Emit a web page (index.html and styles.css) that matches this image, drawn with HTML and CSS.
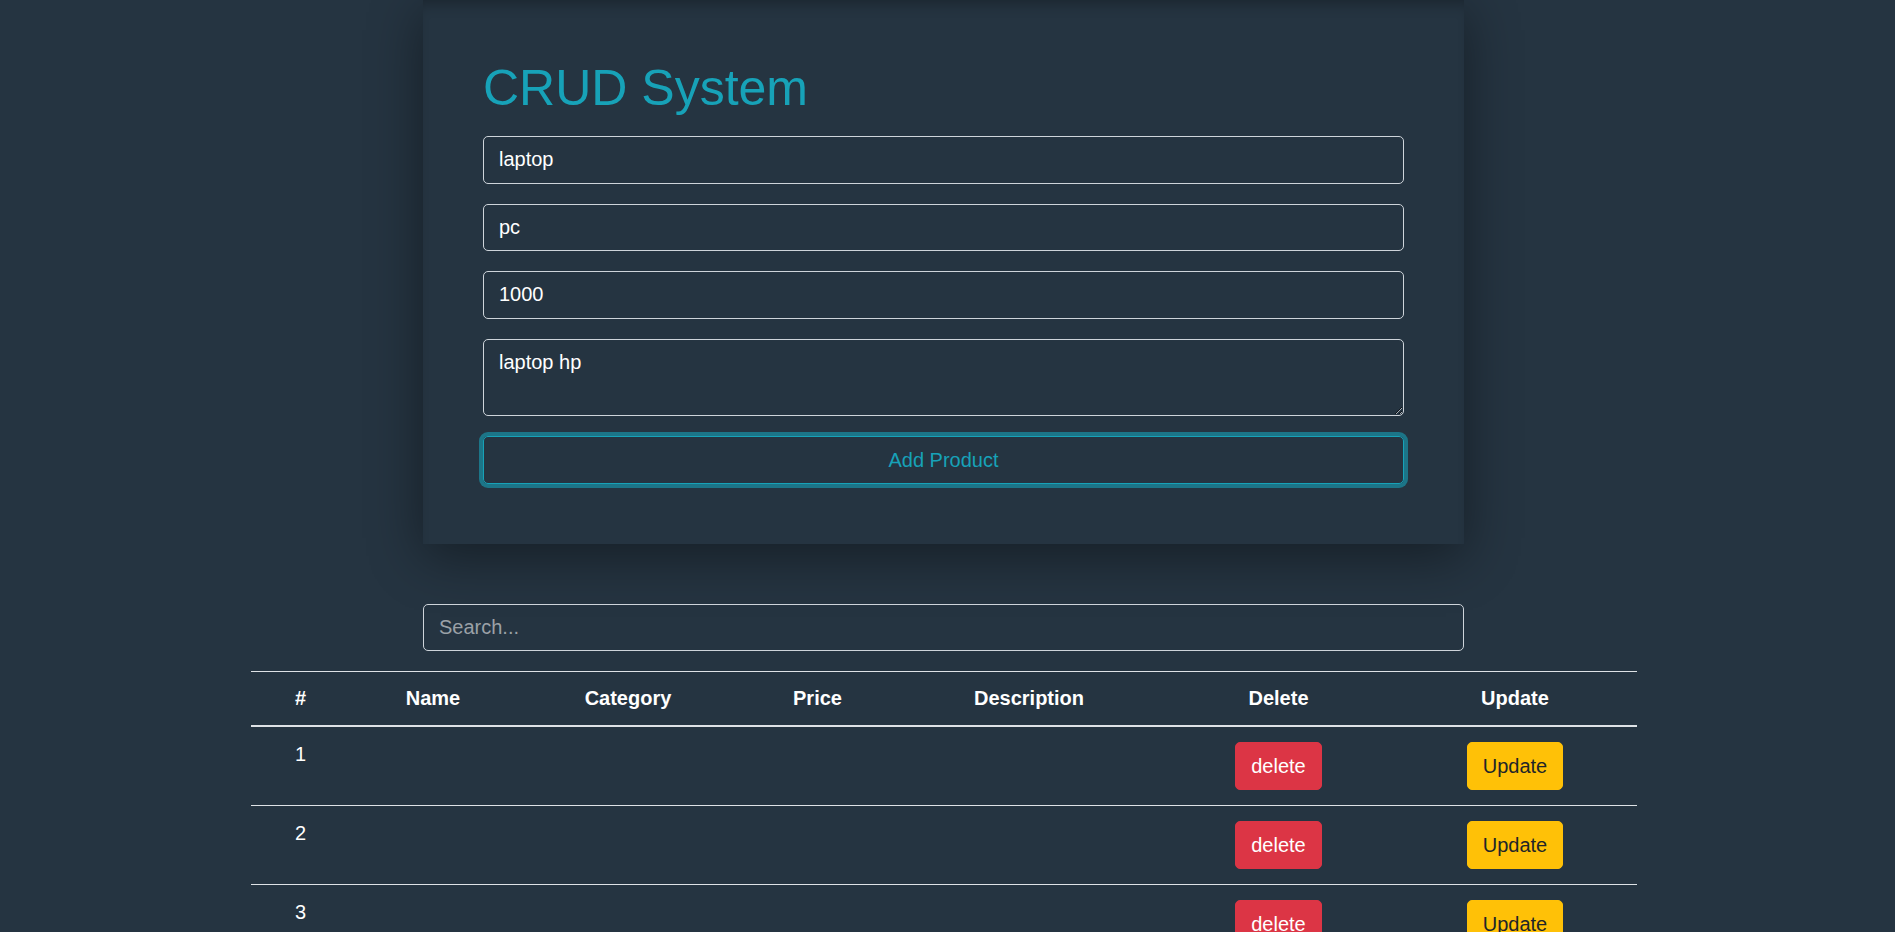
FILE: index.html
```html
<!DOCTYPE html>
<html lang="en">
<head>
<meta charset="utf-8">
<title>CRUD System</title>
<link rel="stylesheet" href="styles.css">
</head>
<body>
<div class="page">
  <section class="card">
    <h1 class="title">CRUD System</h1>
    <form class="form">
      <input class="field" type="text" value="laptop">
      <input class="field" type="text" value="pc">
      <input class="field" type="text" value="1000">
      <textarea class="field area" rows="2">laptop hp</textarea>
      <button type="button" class="btn-add">Add Product</button>
    </form>
  </section>

  <input class="field search" type="text" placeholder="Search...">

  <table class="products">
    <colgroup>
      <col class="c1"><col class="c2"><col class="c3"><col class="c4"><col class="c5"><col class="c6"><col class="c7">
    </colgroup>
    <thead>
      <tr>
        <th>#</th><th>Name</th><th>Category</th><th>Price</th><th>Description</th><th>Delete</th><th>Update</th>
      </tr>
    </thead>
    <tbody>
      <tr>
        <td>1</td><td></td><td></td><td></td><td></td>
        <td><button type="button" class="btn btn-del">delete</button></td>
        <td><button type="button" class="btn btn-upd">Update</button></td>
      </tr>
      <tr>
        <td>2</td><td></td><td></td><td></td><td></td>
        <td><button type="button" class="btn btn-del">delete</button></td>
        <td><button type="button" class="btn btn-upd">Update</button></td>
      </tr>
      <tr>
        <td>3</td><td></td><td></td><td></td><td></td>
        <td><button type="button" class="btn btn-del">delete</button></td>
        <td><button type="button" class="btn btn-upd">Update</button></td>
      </tr>
    </tbody>
  </table>
</div>
</body>
</html>
```

FILE: styles.css
```css
* { box-sizing: border-box; }

html, body {
  margin: 0;
  background: #253441;
  font-family: "Liberation Sans", Arial, sans-serif;
  color: #ffffff;
}

.page {
  padding-right: 8px;
  padding-bottom: 40px;
  display: flex;
  flex-direction: column;
  align-items: center;
}

.card {
  width: 1041px;
  padding: 58px 60px 60px;
  background: #253441;
  box-shadow: 0 12px 50px rgba(0, 0, 0, 0.42), inset 0 12px 14px -8px rgba(0, 0, 0, 0.28);
}

.title {
  margin: 0 0 18px;
  font-size: 50px;
  line-height: 60px;
  font-weight: normal;
  color: #17a2b8;
}

.form {
  display: flex;
  flex-direction: column;
  gap: 20px;
}

.field {
  display: block;
  width: 100%;
  height: 47.5px;
  padding: 7.5px 15px;
  font-family: "Liberation Sans", Arial, sans-serif;
  font-size: 20px;
  line-height: 30px;
  color: #ffffff;
  background: transparent;
  border: 1px solid #ced4da;
  border-radius: 5px;
  outline: none;
}

.field::placeholder { color: #9ba1a7; }

.area {
  height: 77.5px;
  resize: both;
}

.btn-add {
  height: 47.5px;
  width: 100%;
  font-family: "Liberation Sans", Arial, sans-serif;
  font-size: 20px;
  line-height: 30px;
  color: #17a2b8;
  background: transparent;
  border: 1px solid #17a2b8;
  border-radius: 5px;
  box-shadow: 0 0 0 4px rgba(23, 162, 184, 0.6);
}

.search {
  width: 1041px;
  margin-top: 60px;
}

.products {
  width: 1386px;
  margin-top: 20px;
  border-collapse: collapse;
  table-layout: fixed;
  border-top: 1px solid #dee2e6;
  font-size: 20px;
  line-height: 30px;
}

.c1 { width: 100px; }
.c2 { width: 165px; }
.c3 { width: 225px; }
.c4 { width: 154px; }
.c5 { width: 269px; }
.c6 { width: 230px; }
.c7 { width: 243px; }

.products th {
  padding: 11px 12px 12px;
  font-weight: bold;
  text-align: center;
  border-bottom: 2px solid #dee2e6;
}

.products td {
  padding: 12px;
  text-align: center;
  vertical-align: top;
  border-bottom: 1px solid #dee2e6;
}

.btn {
  margin: 3px 0;
  padding: 8px 15px;
  font-family: "Liberation Sans", Arial, sans-serif;
  font-size: 20px;
  line-height: 30px;
  border: 1px solid transparent;
  border-radius: 5px;
  vertical-align: top;
}

.btn-del {
  background: #dc3545;
  border-color: #dc3545;
  color: #ffffff;
}

.btn-upd {
  background: #ffc107;
  border-color: #ffc107;
  color: #212529;
}
```
